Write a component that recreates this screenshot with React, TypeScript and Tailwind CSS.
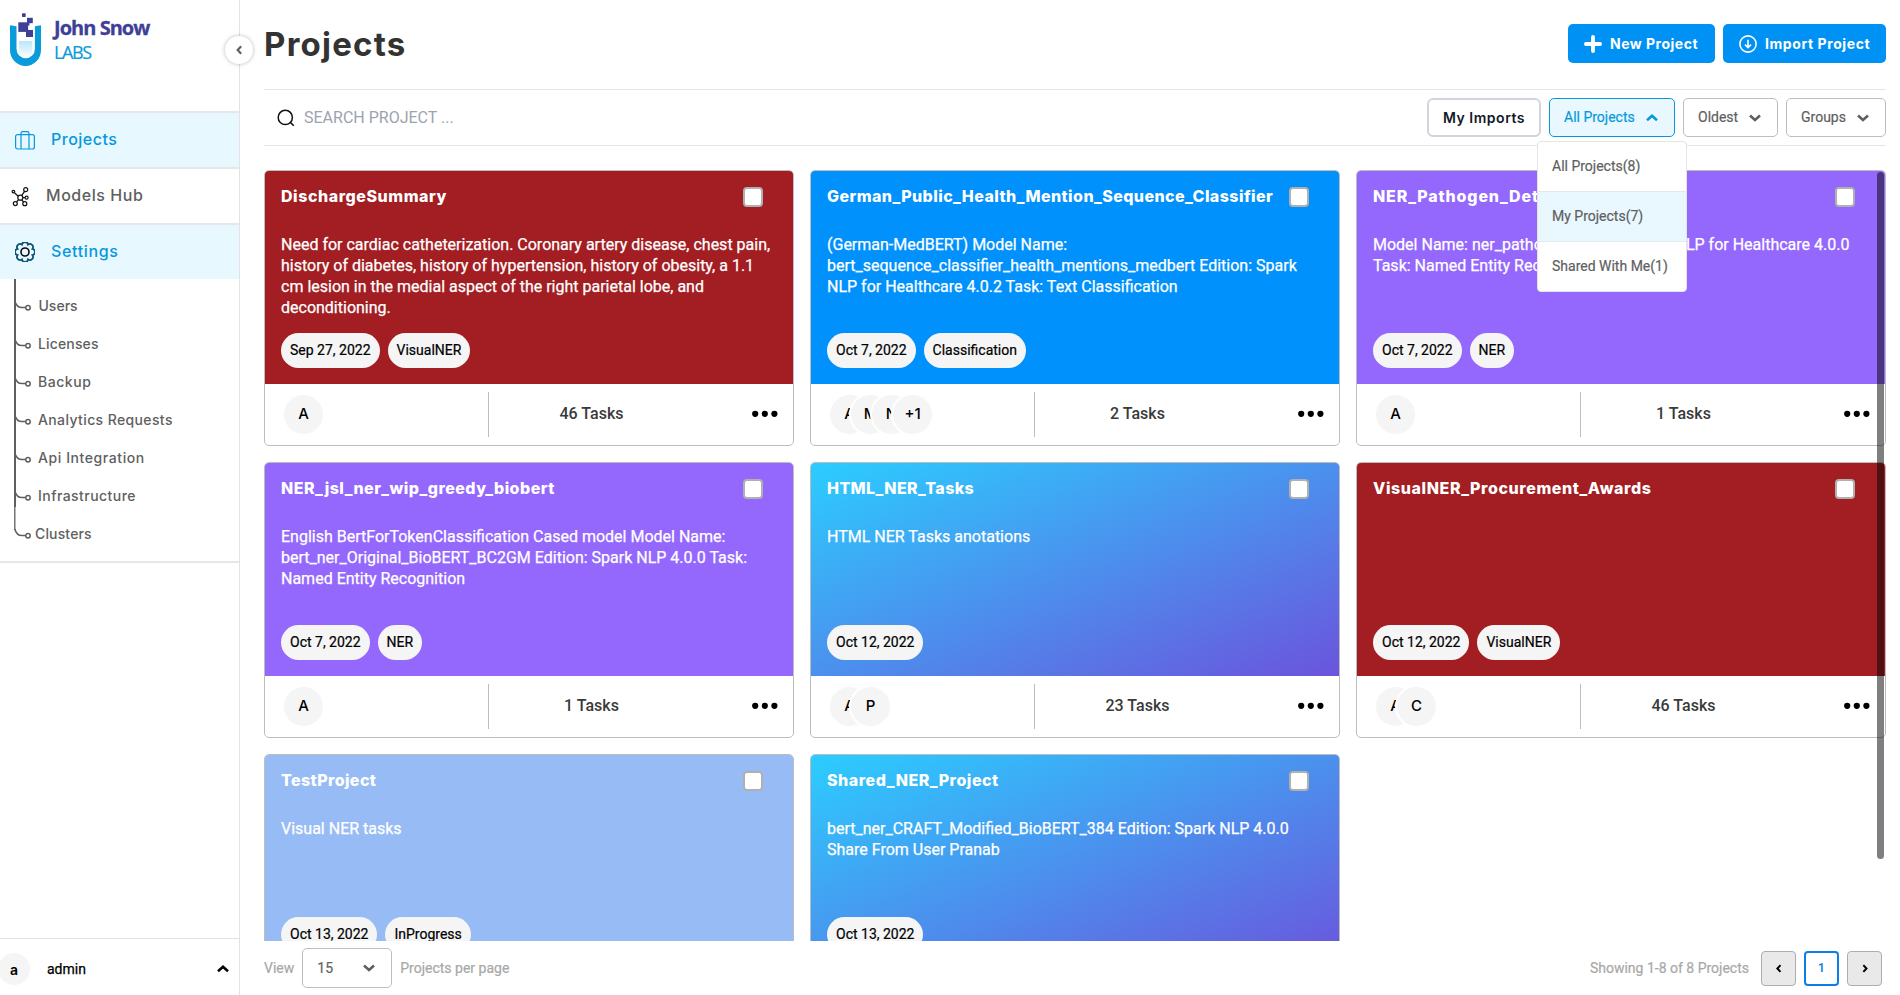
import type { ReactNode } from "react";
import clsx from "clsx";

type Project = {
  title: string;
  tracking: string;
  description: string;
  tags: string[];
  background: string;
  members: string[];
  tasks: string;
};

const RED = "bg-[#a21e22]";
const BLUE = "bg-[#0091fd]";
const PURPLE = "bg-[#9468fc]";
const LIGHT_BLUE = "bg-[#97bcf5]";
const GRADIENT = "bg-[linear-gradient(to_bottom_right,#2bcdff,#6b54dc)]";

const projects: Project[] = [
  {
    title: "DischargeSummary",
    tracking: "tracking-[0.55px]",
    description:
      "Need for cardiac catheterization. Coronary artery disease, chest pain,\nhistory of diabetes, history of hypertension, history of obesity, a 1.1\ncm lesion in the medial aspect of the right parietal lobe, and\ndeconditioning.",
    tags: ["Sep 27, 2022", "VisualNER"],
    background: RED,
    members: ["A"],
    tasks: "46 Tasks",
  },
  {
    title: "German_Public_Health_Mention_Sequence_Classifier",
    tracking: "tracking-[0.43px]",
    description:
      "(German-MedBERT) Model Name:\nbert_sequence_classifier_health_mentions_medbert Edition: Spark\nNLP for Healthcare 4.0.2 Task: Text Classification",
    tags: ["Oct 7, 2022", "Classification"],
    background: BLUE,
    members: ["A", "M", "N", "+1"],
    tasks: "2 Tasks",
  },
  {
    title: "NER_Pathogen_Detection",
    tracking: "tracking-[0.85px]",
    description:
      "Model Name: ner_pathogen Edition: Spark NLP for Healthcare 4.0.0\nTask: Named Entity Recognition",
    tags: ["Oct 7, 2022", "NER"],
    background: PURPLE,
    members: ["A"],
    tasks: "1 Tasks",
  },
  {
    title: "NER_jsl_ner_wip_greedy_biobert",
    tracking: "tracking-[0.46px]",
    description:
      "English BertForTokenClassification Cased model Model Name:\nbert_ner_Original_BioBERT_BC2GM Edition: Spark NLP 4.0.0 Task:\nNamed Entity Recognition",
    tags: ["Oct 7, 2022", "NER"],
    background: PURPLE,
    members: ["A"],
    tasks: "1 Tasks",
  },
  {
    title: "HTML_NER_Tasks",
    tracking: "tracking-[0.4px]",
    description: "HTML NER Tasks anotations",
    tags: ["Oct 12, 2022"],
    background: GRADIENT,
    members: ["A", "P"],
    tasks: "23 Tasks",
  },
  {
    title: "VisualNER_Procurement_Awards",
    tracking: "tracking-[0.6px]",
    description: "",
    tags: ["Oct 12, 2022", "VisualNER"],
    background: RED,
    members: ["A", "C"],
    tasks: "46 Tasks",
  },
  {
    title: "TestProject",
    tracking: "tracking-[0.4px]",
    description: "Visual NER tasks",
    tags: ["Oct 13, 2022", "InProgress"],
    background: LIGHT_BLUE,
    members: ["A"],
    tasks: "1 Tasks",
  },
  {
    title: "Shared_NER_Project",
    tracking: "tracking-[0.53px]",
    description:
      "bert_ner_CRAFT_Modified_BioBERT_384 Edition: Spark NLP 4.0.0\nShare From User Pranab",
    tags: ["Oct 13, 2022"],
    background: GRADIENT,
    members: ["A"],
    tasks: "1 Tasks",
  },
];

const settingsLinks = [
  { label: "Users", style: "pl-[6.5px]" },
  { label: "Licenses", style: "pl-[6px] tracking-[0.15px]" },
  { label: "Backup", style: "pl-[6px] tracking-[0.55px]" },
  { label: "Analytics Requests", style: "pl-[6px] tracking-[0.38px]" },
  { label: "Api Integration", style: "pl-[6px] tracking-[0.58px]" },
  { label: "Infrastructure", style: "pl-[6px] tracking-[0.45px]" },
  { label: "Clusters", style: "pl-[3px] tracking-[0.15px]" },
];

const HEADING = "font-['Inter',sans-serif]";

function Chevron({ direction, className }: { direction: "up" | "down" | "left" | "right"; className?: string }) {
  const points = {
    down: "1,1.6 6,6 11,1.6",
    up: "1,6.2 6,1.8 11,6.2",
    left: "6,1.6 1.8,6 6,10.4",
    right: "1.8,1.6 6,6 1.8,10.4",
  }[direction];
  const vertical = direction === "up" || direction === "down";
  return (
    <svg viewBox={vertical ? "0 0 12 8" : "0 0 8 12"} className={className} fill="none" stroke="currentColor" strokeWidth="2.6">
      <polyline points={points} />
    </svg>
  );
}

function Logo() {
  return (
    <div className="flex pl-[10px] pt-[13px]">
      <svg width="32" height="54" viewBox="0 0 32 54">
        <defs>
          <linearGradient id="liquid" x1="0" y1="0" x2="0" y2="1">
            <stop offset="0" stopColor="#b9e6fb" />
            <stop offset="1" stopColor="#ffffff" />
          </linearGradient>
        </defs>
        <path d="M0 12.3 L6.5 13.3 V36 a9.2 9.2 0 0 0 18.4 0 V13.3 L31 12.3 V37 a15.5 16 0 0 1 -31 0 Z" fill="#0a9bdb" />
        <path d="M9 28 H22.3 V37 a6.6 8 0 0 1 -13.3 0 Z" fill="url(#liquid)" />
        <g fill="#3f3f97">
          <rect x="12" y="0.3" width="3.7" height="3.6" rx="0.6" />
          <rect x="17" y="4.8" width="5.8" height="5.4" />
          <rect x="8.3" y="9.3" width="9.8" height="9.6" />
          <rect x="16" y="17" width="7" height="7" />
          <rect x="17" y="10" width="2.4" height="2.6" />
        </g>
      </svg>
      <div className="flex flex-col pl-3 pt-[3px] font-['Open_Sans',sans-serif]">
        <span className="text-[20px] leading-6 font-bold tracking-[-0.97px] text-[#3f3f97] [-webkit-text-stroke:0.3px]">John Snow</span>
        <span className="text-[18px] leading-6 tracking-[-1.4px] text-[#0a9bdb] [-webkit-text-stroke:0.2px]">LABS</span>
      </div>
    </div>
  );
}

function BriefcaseIcon() {
  return (
    <svg width="20" height="19" viewBox="0 0 20 19" fill="none" stroke="currentColor" strokeWidth="1.2">
      <rect x="0.6" y="3.6" width="18.8" height="14.4" rx="2" />
      <path d="M6 18 V2.4 Q6 0.7 7.6 0.7 H12.4 Q14 0.7 14 2.4 V18" />
    </svg>
  );
}

function HubIcon() {
  return (
    <svg width="18" height="21" viewBox="0 0 18 21" fill="none" stroke="#111111" strokeWidth="1.2">
      <path d="M10.8 9.4 L13.4 5.6 M7.2 10.2 L3.5 6.8 M12 11.6 H14 M7.6 13.6 L5.5 16 M10.6 13.9 L12.7 16" />
      <circle cx="9.3" cy="11.7" r="2.5" />
      <circle cx="14.7" cy="3.7" r="2" />
      <circle cx="2.4" cy="5.6" r="1.3" />
      <circle cx="15.6" cy="11.7" r="1.5" />
      <circle cx="4.3" cy="17.6" r="2" />
      <circle cx="13.8" cy="17.7" r="2" />
    </svg>
  );
}

function GearIcon() {
  const lobes = Array.from({ length: 8 }, (_, i) => {
    const angle = ((i + 1.5) * Math.PI) / 4;
    return `A3.1 3.1 0 0 1 ${(10 + 8 * Math.cos(angle)).toFixed(2)} ${(10 + 8 * Math.sin(angle)).toFixed(2)}`;
  }).join(" ");
  const start = Math.PI / 8;
  return (
    <svg width="20" height="20" viewBox="0 0 20 20" fill="none">
      <path
        d={`M${(10 + 8 * Math.cos(start)).toFixed(2)} ${(10 + 8 * Math.sin(start)).toFixed(2)} ${lobes} Z`}
        stroke="#0a5577"
        strokeWidth="1.8"
      />
      <circle cx="10" cy="10" r="4" stroke="#0b0b0b" strokeWidth="1.6" />
    </svg>
  );
}

function TreeLines() {
  return (
    <svg width="18" height="282" viewBox="0 0 18 282" fill="none" stroke="#5f5f5f" className="shrink-0">
      <path d="M1 0 V228" strokeWidth="2" />
      <path d="M0.8 228 V251" strokeWidth="1.3" />
      {settingsLinks.map((link, i) => (
        <g key={link.label} transform={`translate(0 ${i * 38})`} strokeWidth="1.5">
          <path d="M0.8 22 Q2.5 28.6 8 28.6 H11.6" />
          <circle cx="14" cy="28.8" r="2.2" />
        </g>
      ))}
    </svg>
  );
}

function NavItem({ icon, label, active, className }: { icon: ReactNode; label: string; active?: boolean; className: string }) {
  return (
    <a
      className={clsx(
        "flex h-14 items-center border-t-2 border-[#e7e7e7] text-[16px] font-medium",
        HEADING,
        active ? "bg-[#e8f8ff] text-[#0599dc]" : "text-[#606060]",
        className,
      )}
    >
      {icon}
      <span className="pb-0.5">{label}</span>
    </a>
  );
}

function Sidebar() {
  return (
    <aside className="relative flex h-full w-[240px] shrink-0 flex-col border-r border-[#e3e3e3]">
      <div className="h-[111px]">
        <Logo />
      </div>
      <button className="absolute top-9 -right-[14px] flex size-7 items-center justify-center rounded-full bg-white text-[#606060] shadow-[0_0_4px_rgba(0,0,0,0.28)]">
        <Chevron direction="left" className="h-[10px] w-[7px]" />
      </button>
      <nav className="flex flex-col">
        <NavItem icon={<BriefcaseIcon />} label="Projects" active className="gap-4 pl-[15px] tracking-[0.5px]" />
        <NavItem icon={<HubIcon />} label="Models Hub" className="gap-[17px] pl-[11px] tracking-[0.55px]" />
        <NavItem icon={<GearIcon />} label="Settings" active className="gap-4 pl-[15px] tracking-[0.65px]" />
      </nav>
      <div className="flex h-[284px] border-b-2 border-[#e7e7e7] pl-[14px]">
        <TreeLines />
        <ul className={clsx("pt-[7px] text-[14px] font-medium text-[#606060]", HEADING)}>
          {settingsLinks.map((link) => (
            <li key={link.label} className={clsx("flex h-[38px] items-center", link.style)}>
              {link.label}
            </li>
          ))}
        </ul>
      </div>
      <div className="mt-auto flex h-[57px] items-center overflow-hidden border-t border-[#e3e3e3] pt-1">
        <span className={clsx("-ml-[2px] flex size-8 items-center justify-center rounded-full bg-[#f5f5f5] text-[14px] font-semibold text-black", HEADING)}>
          a
        </span>
        <span className="ml-[17px] text-[14px] text-black [-webkit-text-stroke:0.25px]">admin</span>
        <Chevron direction="up" className="mr-[10px] ml-auto h-2 w-3 text-black" />
      </div>
    </aside>
  );
}

function Avatars({ members }: { members: string[] }) {
  return (
    <div className="flex w-[223px] pl-[17px]">
      {members.map((member, i) => (
        <span
          key={i}
          className={clsx(
            "flex size-[43px] shrink-0 items-center justify-center rounded-full border-2 border-white bg-[#f5f5f5] text-[15px] font-medium text-black",
            HEADING,
            i > 0 && "-ml-[22px]",
          )}
        >
          {member}
        </span>
      ))}
    </div>
  );
}

function ProjectCard({ project }: { project: Project }) {
  return (
    <article className="flex h-[276px] flex-col overflow-hidden rounded-[5px] border border-[#bdbdbd] bg-white">
      <div className={clsx("flex h-[213px] shrink-0 flex-col px-4 py-4 text-white", project.background)}>
        <div className="flex h-5 items-center justify-between pr-[14px]">
          <h2 className={clsx("pb-0.5 text-[16px] leading-5 font-extrabold whitespace-nowrap", HEADING, project.tracking)}>{project.title}</h2>
          <span className="size-5 shrink-0 rounded-[4px] border-2 border-[#b0b0b0] bg-white" />
        </div>
        <p className="mt-[27px] text-[16px] leading-[21px] whitespace-pre [-webkit-text-stroke:0.25px]">{project.description}</p>
        <div className="mt-auto flex gap-2">
          {project.tags.map((tag) => (
            <span key={tag} className="flex h-[35px] items-center rounded-full bg-[#f5f5f5] px-[9px] text-[14px] text-black [-webkit-text-stroke:0.2px]">
              {tag}
            </span>
          ))}
        </div>
      </div>
      <div className="flex h-[61px] items-center">
        <Avatars members={project.members} />
        <span className="h-[45px] w-px bg-[#bdbdbd]" />
        <span className="w-[205px] pb-0.5 text-center text-[16px] font-medium text-[#3a3a3a]">{project.tasks}</span>
        <svg width="26" height="8" viewBox="0 0 26 8" className="mr-[15px] mb-px ml-auto">
          <circle cx="3.2" cy="3.8" r="3.1" />
          <circle cx="12.8" cy="3.8" r="3.1" />
          <circle cx="22.4" cy="3.8" r="3.1" />
        </svg>
      </div>
    </article>
  );
}

function FilterButton({ label, width, open }: { label: string; width: string; open?: boolean }) {
  return (
    <button
      className={clsx(
        "flex h-[39px] items-center justify-between rounded-[5px] border pr-4 pl-[14px] text-[14px] [-webkit-text-stroke:0.2px]",
        width,
        open ? "border-[#0599dc] bg-[#e9f8ff] text-[#0599dc]" : "border-[#bdbdbd] bg-white text-[#5f5f5f]",
      )}
    >
      {label}
      <Chevron direction={open ? "up" : "down"} className="mt-px h-2 w-3" />
    </button>
  );
}

function Header() {
  return (
    <header className="flex h-[89px] justify-between">
      <h1 className={clsx("pt-6 text-[33px] leading-[40px] font-bold tracking-[1.25px] text-[#333333]", HEADING)}>Projects</h1>
      <div className={clsx("mt-6 flex h-[39px] gap-2 text-[14px] font-bold text-white", HEADING)}>
        <button className="flex w-[147px] items-center rounded-[5px] bg-[#0091f5] pl-4 tracking-[0.5px]">
          <svg width="18" height="18" viewBox="0 0 18 18" fill="none" stroke="currentColor" strokeWidth="3.8" strokeLinecap="round" className="mr-[8px]">
            <path d="M9 1.9 V16.1 M1.9 9 H16.1" />
          </svg>
          New Project
        </button>
        <button className="flex w-[163px] items-center rounded-[5px] bg-[#0091f5] pl-4 tracking-[0.58px]">
          <svg width="18" height="18" viewBox="0 0 18 18" fill="none" stroke="currentColor" strokeWidth="1.6" className="mr-2">
            <circle cx="9" cy="9" r="8.1" />
            <path d="M9 4.8 V12.6 M6 9.6 L9 12.7 L12 9.6" />
          </svg>
          Import Project
        </button>
      </div>
    </header>
  );
}

function Toolbar() {
  return (
    <div className="flex h-[57px] items-center border-y border-[#e5e5e5] pb-px">
      <svg width="18" height="18" viewBox="0 0 18 18" fill="none" stroke="#111111" strokeWidth="1.5" className="mt-px ml-[13px]">
        <circle cx="8.3" cy="8.4" r="7.1" />
        <path d="M13.3 13.4 L16.8 16.8" />
      </svg>
      <span className="ml-[9px] pt-0.5 text-[16px] text-[#9ca3af]">SEARCH PROJECT ...</span>
      <div className="ml-auto flex gap-2">
        <button className={clsx("h-[39px] w-[114px] rounded-[6px] border-2 border-[#d1d5db] pt-px text-[14px] font-semibold tracking-[0.52px] text-[#111827]", HEADING)}>
          My Imports
        </button>
        <div className="relative">
          <FilterButton label="All Projects" width="w-[126px]" open />
          <div className="absolute top-[43px] -left-3 z-10 flex w-[150px] flex-col overflow-hidden rounded-[4px] border border-[#e5e5e5] bg-white text-[14px] text-[#5f5f5f] [-webkit-text-stroke:0.2px]">
            <span className="flex h-[49px] items-center pl-[14px]">All Projects(8)</span>
            <span className="flex h-[50px] items-center border-t border-[#e2e8ec] bg-[#e9f8ff] pl-[14px]">My Projects(7)</span>
            <span className="flex h-[50px] items-center border-t border-[#e2e8ec] pl-[14px]">Shared With Me(1)</span>
          </div>
        </div>
        <FilterButton label="Oldest" width="w-[95px]" />
        <FilterButton label="Groups" width="w-[100px]" />
      </div>
    </div>
  );
}

function Footer() {
  return (
    <footer className="flex h-[54px] items-center text-[14px] text-[#a8a8a8] [-webkit-text-stroke:0.2px]">
      <span>View</span>
      <button className="ml-2 flex h-10 w-[90px] items-center justify-between rounded-[5px] border border-[#bdbdbd] pr-4 pl-[14px] text-[#5f5f5f]">
        15
        <Chevron direction="down" className="h-2 w-3" />
      </button>
      <span className="ml-2">Projects per page</span>
      <span className="ml-auto">Showing 1-8 of 8 Projects</span>
      <div className="mr-1 ml-3 flex gap-2 text-black">
        <button className="flex size-[35px] items-center justify-center rounded-[4px] border border-[#adadad] bg-[#e9e9e9]">
          <Chevron direction="left" className="h-[9px] w-[6px]" />
        </button>
        <button className="flex size-[35px] items-center justify-center rounded-[4px] border-2 border-[#0a7fe6] bg-white text-[12px] font-medium text-[#0a7fe6]">
          1
        </button>
        <button className="flex size-[35px] items-center justify-center rounded-[4px] border border-[#adadad] bg-[#e9e9e9]">
          <Chevron direction="right" className="h-[9px] w-[6px]" />
        </button>
      </div>
    </footer>
  );
}

export default function App() {
  return (
    <div className="flex h-[995px] w-full overflow-hidden bg-white font-['Roboto',sans-serif]">
      <Sidebar />
      <main className="flex min-w-0 flex-1 flex-col pr-[14px] pl-6">
        <Header />
        <Toolbar />
        <section className="relative mt-6 h-[771px] overflow-hidden">
          <div className="grid grid-cols-3 gap-4">
            {projects.map((project) => (
              <ProjectCard key={project.title} project={project} />
            ))}
          </div>
          <span className="absolute top-[2px] right-[2px] h-[687px] w-[7px] rounded-full bg-black/50" />
        </section>
        <Footer />
      </main>
    </div>
  );
}
